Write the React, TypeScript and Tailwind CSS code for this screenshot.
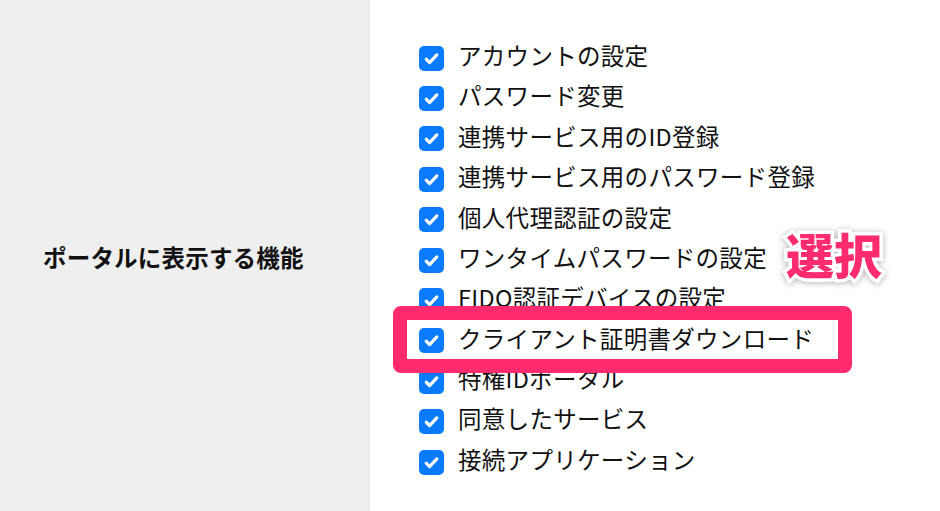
import React from 'react'

const items = [
  'アカウントの設定',
  'パスワード変更',
  '連携サービス用のID登録',
  '連携サービス用のパスワード登録',
  '個人代理認証の設定',
  'ワンタイムパスワードの設定',
  'FIDO認証デバイスの設定',
  'クライアント証明書ダウンロード',
  '特権IDポータル',
  '同意したサービス',
  '接続アプリケーション',
]

function Check() {
  return (
    <span className="flex h-[25px] w-[25px] shrink-0 items-center justify-center rounded-[5px] bg-[#0a7aff]">
      <svg width="17" height="17" viewBox="0 0 16 16" fill="none">
        <path d="M3 8.6l3.2 3.2L13 4.6" stroke="white" strokeWidth="3" strokeLinecap="round" strokeLinejoin="round" />
      </svg>
    </span>
  )
}

export default function App() {
  return (
    <div className="flex h-[511px] w-[940px] overflow-hidden bg-white text-[#111] [font-family:'Noto_Sans_CJK_JP',sans-serif]">
      <div className="flex w-[370px] shrink-0 items-center border-r border-[#e6e6e6] bg-[#efefef] pl-[43px] pt-[4px]">
        <span className="text-[23.5px] font-bold tracking-[0.2px]">ポータルに表示する機能</span>
      </div>
      <div className="relative flex-1 pl-[49px] pt-[38px]">
        {items.map((t) => (
          <div key={t} className="flex h-[40.4px] items-center gap-[14px]">
            <Check />
            <span className="pb-[5px] text-[23.5px] leading-none tracking-[0.3px]">{t}</span>
          </div>
        ))}
        <div className="absolute left-[23px] top-[306px] h-[67px] w-[459px] rounded-[8px] border-[14px] border-[#fe2c6e]" />
        <div className="absolute left-[416px] top-[229px] text-[48px] font-black leading-none text-[#fe2c6e] [paint-order:stroke_fill] [-webkit-text-stroke:7px_white] [filter:drop-shadow(0_1px_3px_rgba(0,0,0,0.3))]">
          選択
        </div>
      </div>
    </div>
  )
}
